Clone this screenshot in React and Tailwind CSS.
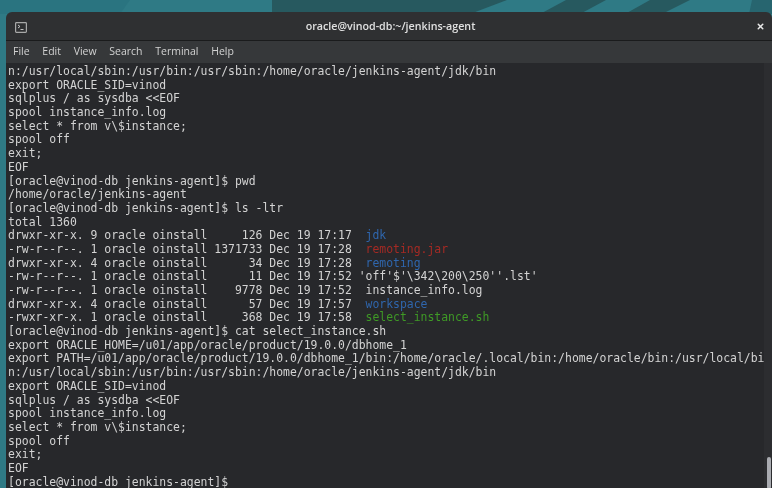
import React from "react";
import { X } from "lucide-react";

const blue = "text-[#2f66ad]";
const red = "text-[#a52a24]";
const green = "text-[#3f9a26]";

const scriptLines = [
  "export ORACLE_SID=vinod",
  "sqlplus / as sysdba <<EOF",
  "spool instance_info.log",
  "select * from v\\$instance;",
  "spool off",
  "exit;",
  "EOF",
];

const files = [
  { meta: "drwxr-xr-x. 9 oracle oinstall     126 Dec 19 17:17", name: " jdk", color: blue },
  { meta: "-rw-r--r--. 1 oracle oinstall 1371733 Dec 19 17:28", name: " remoting.jar", color: red },
  { meta: "drwxr-xr-x. 4 oracle oinstall      34 Dec 19 17:28", name: " remoting", color: blue },
  { meta: "-rw-r--r--. 1 oracle oinstall      11 Dec 19 17:52", name: "'off'$'\\342\\200\\250''.lst'", color: "" },
  { meta: "-rw-r--r--. 1 oracle oinstall    9778 Dec 19 17:52", name: " instance_info.log", color: "" },
  { meta: "drwxr-xr-x. 4 oracle oinstall      57 Dec 19 17:57", name: " workspace", color: blue },
  { meta: "-rwxr-xr-x. 1 oracle oinstall     368 Dec 19 17:58", name: " select_instance.sh", color: green },
];

const Line = ({ children }) => <div className="h-[13.7px] whitespace-pre">{children}</div>;

const App = () => {
  return (
    <div className="relative w-[772px] h-[488px] overflow-hidden bg-[#2f7a85] blur-[0.35px]">
      {/* wallpaper stripes, only the top strip shows */}
      <svg className="absolute left-0 top-0" width="772" height="14" viewBox="0 0 772 14">
        <polygon points="0,0 130,0 120,14 0,14" fill="#2a7480" />
        <polygon points="272,0 507,0 470,14 272,14" fill="#27595f" />
        <polygon points="566,0 606,0 580,14 540,14" fill="#27595f" />
        <polygon points="650,0 690,0 662,14 625,14" fill="#27595f" />
        <polygon points="752,0 772,0 772,14 749,14" fill="#27656f" />
      </svg>

      <div className="absolute left-[6px] top-[12px] right-0 bottom-0 flex flex-col rounded-t-md overflow-hidden font-['DejaVu_Sans_Mono',monospace]">
        {/* title bar */}
        <div className="relative h-[29px] shrink-0 flex items-center justify-center pl-[3px] bg-[#2f3032] border-b border-[#1a1b1c] font-['Open_Sans',sans-serif] text-[10.7px] font-semibold text-[#e0e0e0]">
          <svg className="absolute left-[9px] top-[10px]" width="12" height="11" viewBox="0 0 12 11" fill="none">
            <rect x="0.6" y="0.6" width="10.8" height="9.8" rx="0.8" stroke="#a8a8a8" strokeWidth="1.2" />
            <path d="M3 3 L5 4.5 L3 6" stroke="#d0d0d0" strokeWidth="0.9" />
            <path d="M5.5 7.5 H8.5" stroke="#d0d0d0" strokeWidth="0.9" />
          </svg>
          oracle@vinod-db:~/jenkins-agent
          <X className="absolute right-[7px] top-[10px] text-[#e8e8e8]" size={9} strokeWidth={4} />
        </div>

        {/* menu bar */}
        <div className="h-[22px] shrink-0 flex items-center gap-[12.7px] pl-[7px] bg-[#36383a] font-['Open_Sans',sans-serif] text-[10.5px] text-[#d2d2d2]">
          <span>File</span>
          <span>Edit</span>
          <span>View</span>
          <span>Search</span>
          <span>Terminal</span>
          <span>Help</span>
        </div>

        {/* terminal output */}
        <div className="relative flex-1 bg-[#27282b] pl-[2px] pt-[2px] text-[11.43px] leading-[13.7px] text-[#d3d3d3]">
          <Line>n:/usr/local/sbin:/usr/bin:/usr/sbin:/home/oracle/jenkins-agent/jdk/bin</Line>
          {scriptLines.map((l, i) => (
            <Line key={i}>{l}</Line>
          ))}
          <Line>[oracle@vinod-db jenkins-agent]$ pwd</Line>
          <Line>/home/oracle/jenkins-agent</Line>
          <Line>[oracle@vinod-db jenkins-agent]$ ls -ltr</Line>
          <Line>total 1360</Line>
          {files.map((f) => (
            <Line key={f.meta}>
              {f.meta} <span className={f.color}>{f.name}</span>
            </Line>
          ))}
          <Line>[oracle@vinod-db jenkins-agent]$ cat select_instance.sh</Line>
          <Line>export ORACLE_HOME=/u01/app/oracle/product/19.0.0/dbhome_1</Line>
          <Line>export PATH=/u01/app/oracle/product/19.0.0/dbhome_1/bin:/home/oracle/.local/bin:/home/oracle/bin:/usr/local/bi</Line>
          <Line>n:/usr/local/sbin:/usr/bin:/usr/sbin:/home/oracle/jenkins-agent/jdk/bin</Line>
          {scriptLines.map((l, i) => (
            <Line key={i}>{l}</Line>
          ))}
          <Line>[oracle@vinod-db jenkins-agent]$</Line>

          {/* scrollbar */}
          <div className="absolute right-0 top-0 bottom-0 w-[8px] bg-[#2c2d30]">
            <div className="absolute right-[1px] top-[394px] bottom-0 w-[4px] rounded-full bg-[#a9abb0]" />
          </div>
        </div>
      </div>
    </div>
  );
};

export default App;
